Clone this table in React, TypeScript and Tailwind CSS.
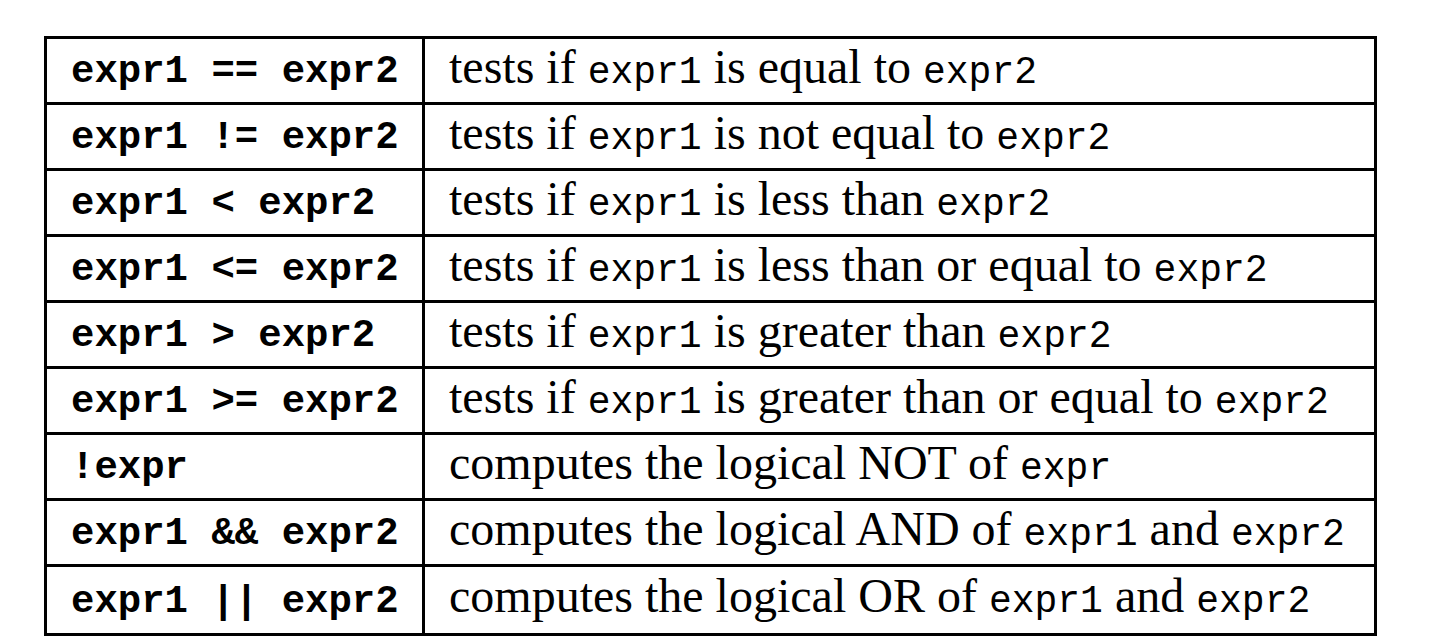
import React from "react";

type Part = { t: string; code?: boolean };

const rows: { left: string; right: Part[] }[] = [
  { left: "expr1 == expr2", right: [{ t: "tests if " }, { t: "expr1", code: true }, { t: " is equal to " }, { t: "expr2", code: true }] },
  { left: "expr1 != expr2", right: [{ t: "tests if " }, { t: "expr1", code: true }, { t: " is not equal to " }, { t: "expr2", code: true }] },
  { left: "expr1 < expr2", right: [{ t: "tests if " }, { t: "expr1", code: true }, { t: " is less than " }, { t: "expr2", code: true }] },
  { left: "expr1 <= expr2", right: [{ t: "tests if " }, { t: "expr1", code: true }, { t: " is less than or equal to " }, { t: "expr2", code: true }] },
  { left: "expr1 > expr2", right: [{ t: "tests if " }, { t: "expr1", code: true }, { t: " is greater than " }, { t: "expr2", code: true }] },
  { left: "expr1 >= expr2", right: [{ t: "tests if " }, { t: "expr1", code: true }, { t: " is greater than or equal to " }, { t: "expr2", code: true }] },
  { left: "!expr", right: [{ t: "computes the logical NOT of " }, { t: "expr", code: true }] },
  { left: "expr1 && expr2", right: [{ t: "computes the logical AND of " }, { t: "expr1", code: true }, { t: " and " }, { t: "expr2", code: true }] },
  { left: "expr1 || expr2", right: [{ t: "computes the logical OR of " }, { t: "expr1", code: true }, { t: " and " }, { t: "expr2", code: true }] },
];

const serif = "font-['Liberation_Serif',serif] text-[48px] leading-[48px]";
const mono = "font-['Liberation_Mono',monospace] leading-none whitespace-pre";

export default function App() {
  return (
    <div className="w-[1444px] h-[643px] bg-white text-black overflow-hidden pt-[36px] pl-[44px]">
      <div className="w-[1333px] border-[3px] border-black">
        {rows.map((r, i) => (
          <div
            key={i}
            className={`flex h-[66px] ${i < rows.length - 1 ? "border-b-[3px] border-black" : ""}`}
          >
            <div className="w-[378px] shrink-0 border-r-[3px] border-black flex items-center pl-[24px] pb-[7px]">
              <div className={serif}>
                <span className={`${mono} text-[39px] font-bold`}>{r.left}</span>
              </div>
            </div>
            <div className="flex-1 flex items-center pl-[24px] pb-[7px]">
              <div className={`${serif} whitespace-pre`}>
                {r.right.map((p, j) =>
                  p.code ? (
                    <span key={j} className={`${mono} text-[38px]`}>
                      {p.t}
                    </span>
                  ) : (
                    <span key={j}>{p.t}</span>
                  )
                )}
              </div>
            </div>
          </div>
        ))}
      </div>
    </div>
  );
}
